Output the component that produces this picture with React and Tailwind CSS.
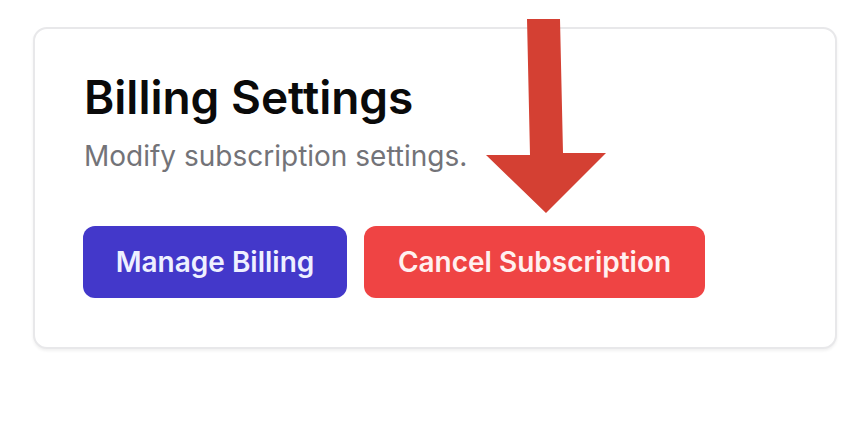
import React from "react";

export default function App() {
  return (
    <div className="relative w-[866px] h-[443px] bg-white" style={{ fontFamily: "Inter, 'Noto Sans', sans-serif" }}>
      <div className="pt-[27px] pl-[33px]">
        <div className="w-[804px] h-[322px] rounded-[14px] border-2 border-[#e8e8ea] shadow-[0_2px_3px_rgba(0,0,0,0.06)] bg-white pl-[49px] pt-[40px]">
          <h1 className="text-[46px] leading-[56px] font-semibold text-[#0a0a0a]">Billing Settings</h1>
          <p className="mt-[13px] text-[28px] leading-[36px] text-[#737378]">Modify subscription settings.</p>
          <div className="mt-[52px] -ml-px flex gap-[17px]">
            <button className="w-[264px] h-[72px] rounded-[12px] bg-[#4338ca] text-[#eef0ff] text-[28px] font-semibold">Manage Billing</button>
            <button className="w-[341px] h-[72px] rounded-[12px] bg-[#ef4444] text-[#fff0f0] text-[28px] font-semibold">Cancel Subscription</button>
          </div>
        </div>
      </div>
      <svg className="absolute left-0 top-0" width="866" height="443" viewBox="0 0 866 443">
        <polygon points="527,19 560,19 563,153 606,153 546,213 486,155 530,155" fill="#d44033" />
      </svg>
    </div>
  );
}
